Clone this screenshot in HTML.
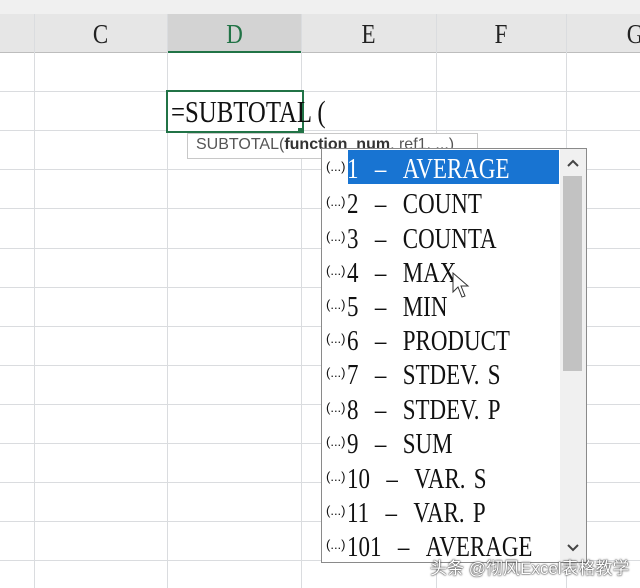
<!DOCTYPE html>
<html><head><meta charset="utf-8"><style>
body{margin:0;width:640px;height:588px;overflow:hidden;background:#fff;position:relative;font-family:"Liberation Sans",sans-serif}
.a{position:absolute}
.hd{position:absolute;top:14px;height:38px;background:#e6e6e6;border-bottom:1px solid #bdbdbd}
.hl{font-family:"Liberation Serif",serif;font-size:27px;color:#222;text-align:center;line-height:40px;display:inline-block;transform:scaleX(.85)}
.vl{position:absolute;width:1px;background:#dadcdf;top:14px;height:574px}
.rl{position:absolute;height:1px;background:#dadcdf;left:0;width:640px}
.it{position:absolute;left:0;height:34px;line-height:34px;font-family:"Liberation Serif",serif;font-size:28px;color:#111;white-space:nowrap}
.it small{font-family:"Liberation Sans",sans-serif;font-size:13px;vertical-align:7px;margin-left:4px;margin-right:1px}
.it span{display:inline-block;transform:scaleX(.82);transform-origin:left;word-spacing:3px}
</style></head><body>
<div class="a" style="left:0;top:0;width:640px;height:14px;background:#f0f0f0"></div>
<div class="hd" style="left:0;width:640px"></div>
<div class="hd" style="left:167px;width:135px;background:#d3d3d3;border-bottom:2px solid #217346;height:37px"></div>
<div class="a hl" style="left:34px;width:133px;top:14px">C</div>
<div class="a hl" style="left:167px;width:135px;top:14px;color:#217346">D</div>
<div class="a hl" style="left:301px;width:135px;top:14px">E</div>
<div class="a hl" style="left:436px;width:130px;top:14px">F</div>
<div class="a hl" style="left:620px;width:30px;top:14px">G</div>
<div class="vl" style="left:34px"></div><div class="vl" style="left:167px"></div><div class="vl" style="left:301px"></div><div class="vl" style="left:436px"></div><div class="vl" style="left:566px"></div>
<div class="rl" style="top:91px"></div><div class="rl" style="top:130px"></div><div class="rl" style="top:169px"></div><div class="rl" style="top:208px"></div><div class="rl" style="top:248px"></div><div class="rl" style="top:287px"></div><div class="rl" style="top:326px"></div><div class="rl" style="top:365px"></div><div class="rl" style="top:404px"></div><div class="rl" style="top:443px"></div><div class="rl" style="top:482px"></div><div class="rl" style="top:521px"></div><div class="rl" style="top:560px"></div>
<div class="a" style="left:166px;top:90px;width:134px;height:39px;border:2px solid #217346;background:#fff"></div>
<div class="a" style="left:171px;top:92px;font-family:'Liberation Serif',serif;font-size:31px;line-height:40px;color:#111;white-space:nowrap"><span style="display:inline-block;transform:scaleX(.8);transform-origin:left">=SUBTOTAL (</span></div>
<div class="a" style="left:298px;top:128px;width:5px;height:5px;background:#217346"></div>
<div class="a" style="left:187px;top:133px;width:289px;height:24px;border:1px solid #c8c8c8;background:#fff;font-size:16px;line-height:22px;color:#555;white-space:nowrap;overflow:hidden"><span style="margin-left:8px">SUBTOTAL(<b style="color:#333">function_num</b>, ref1, ...)</span></div>
<div class="a" style="left:321px;top:148px;width:264px;height:413px;border:1px solid #8a8a8a;background:#fff;overflow:hidden">
<div class="a" style="left:26px;top:1px;width:211px;height:34px;background:#1874d2"></div>
<div class="a" style="left:238px;top:0;width:26px;height:413px;background:#f0f0f0"></div>
<div class="a" style="left:241px;top:27px;width:19px;height:195px;background:#c2c2c2"></div>
<svg class="a" style="left:243px;top:8px" width="16" height="12"><path d="M3 9 L8 4 L13 9" fill="none" stroke="#444" stroke-width="2"/></svg>
<svg class="a" style="left:243px;top:393px" width="16" height="12"><path d="M3 3 L8 8 L13 3" fill="none" stroke="#444" stroke-width="2"/></svg>
<div class="it" style="top:1px"><small>(...)</small><span style="color:#fff">1 &nbsp;– &nbsp;AVERAGE</span></div>
<div class="it" style="top:36px"><small>(...)</small><span>2 &nbsp;– &nbsp;COUNT</span></div>
<div class="it" style="top:71px"><small>(...)</small><span>3 &nbsp;– &nbsp;COUNTA</span></div>
<div class="it" style="top:105px"><small>(...)</small><span>4 &nbsp;– &nbsp;MAX</span></div>
<div class="it" style="top:139px"><small>(...)</small><span>5 &nbsp;– &nbsp;MIN</span></div>
<div class="it" style="top:173px"><small>(...)</small><span>6 &nbsp;– &nbsp;PRODUCT</span></div>
<div class="it" style="top:207px"><small>(...)</small><span>7 &nbsp;– &nbsp;STDEV. S</span></div>
<div class="it" style="top:242px"><small>(...)</small><span>8 &nbsp;– &nbsp;STDEV. P</span></div>
<div class="it" style="top:276px"><small>(...)</small><span>9 &nbsp;– &nbsp;SUM</span></div>
<div class="it" style="top:311px"><small>(...)</small><span>10 &nbsp;– &nbsp;VAR. S</span></div>
<div class="it" style="top:345px"><small>(...)</small><span>11 &nbsp;– &nbsp;VAR. P</span></div>
<div class="it" style="top:379px"><small>(...)</small><span>101 &nbsp;– &nbsp;AVERAGE</span></div>
</div>
<svg class="a" style="left:452px;top:272px" width="20" height="28"><path d="M1 1 L1 20 L6 15 L10 25 L13 24 L9 14 L16 14 Z" fill="#fff" stroke="#333" stroke-width="1"/></svg>
<div class="a" style="left:430px;top:554px;font-family:'Liberation Sans','Noto Sans CJK SC',sans-serif;font-size:17px;color:#fff;text-shadow:0 0 2px #333,0 0 1px #000;white-space:nowrap">头条 @彻风Excel表格教学</div>
</body></html>
